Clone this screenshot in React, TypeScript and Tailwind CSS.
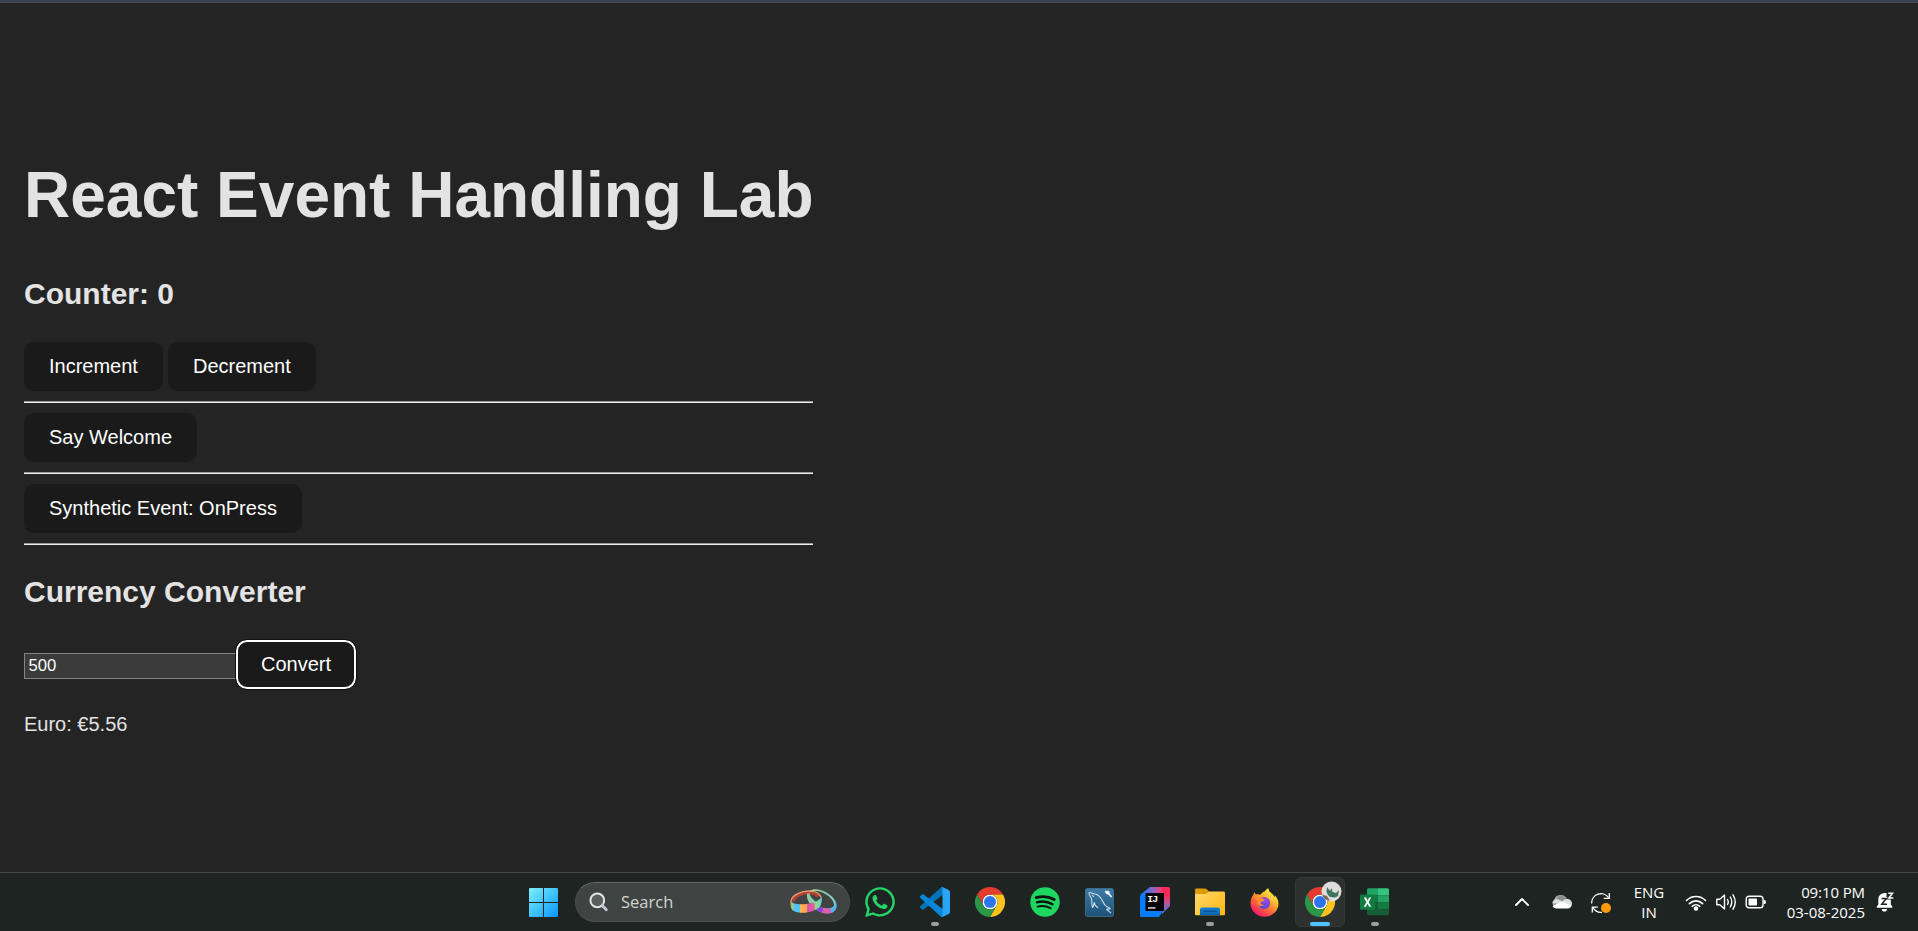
import { useState, type ReactNode } from "react";
import { FaWhatsapp } from "react-icons/fa";

function ChromeLogo({ size = 30 }: { size?: number }) {
  return (
    <svg width={size} height={size} viewBox="0 0 48 48">
      <circle cx="24" cy="24" r="12" fill="#fff" />
      <path fill="#e33b2e" d="M24,12H44.7812a23.9939,23.9939,0,0,0-41.5639.0029L13.6079,30l.0093-.0024A11.9852,11.9852,0,0,1,24,12Z" />
      <path fill="#fcc31e" d="M34.3913,30.0029,24.0007,48A23.994,23.994,0,0,0,44.78,12.0031H23.9989l-.0025.0093A11.985,11.985,0,0,1,34.3913,30.0029Z" />
      <path fill="#2a9648" d="M13.6086,30.0031,3.218,12.006A23.994,23.994,0,0,0,24.0025,48L34.3931,30.0029l-.0067-.0068a11.9852,11.9852,0,0,1-20.7778.007Z" />
      <circle cx="24" cy="24" r="9.6" fill="#2b74ea" />
    </svg>
  );
}

function StartLogo() {
  return (
    <svg width="29" height="29" viewBox="0 0 29 29">
      <defs>
        <linearGradient id="win" x1="0" y1="0" x2="29" y2="29" gradientUnits="userSpaceOnUse">
          <stop offset="0" stopColor="#7df0ff" />
          <stop offset="0.5" stopColor="#42c4fb" />
          <stop offset="1" stopColor="#0a95fb" />
        </linearGradient>
      </defs>
      <path fill="url(#win)" d="M.8 0H14v14H0V.8zM15 0h13.2l.8.8V14H15zM0 15h14v14H.8l-.8-.8zM15 15h14v13.2l-.8.8H15z" />
    </svg>
  );
}

function VsCodeLogo() {
  return (
    <svg width="30" height="30" viewBox="0 0 100 100">
      <path fill="#0072b8" d="M96.4614 10.7962L75.8569 0.875542C73.4719 -0.272773 70.6217 0.211611 68.75 2.08333L1.29858 63.5832C-0.515693 65.2373 -0.513607 68.0937 1.30308 69.7452L6.81272 74.754C8.29793 76.1042 10.5347 76.2036 12.1338 74.9905L93.3609 13.3699C96.086 11.3026 100 13.2462 100 16.6667V16.4275C100 14.0265 98.6246 11.8378 96.4614 10.7962Z" />
      <path fill="#0a86d8" d="M96.4614 89.2038L75.8569 99.1245C73.4719 100.273 70.6217 99.7884 68.75 97.9167L1.29858 36.4169C-0.515693 34.7627 -0.513607 31.9063 1.30308 30.2548L6.81272 25.246C8.29793 23.8958 10.5347 23.7964 12.1338 25.0095L93.3609 86.6301C96.086 88.6974 100 86.7538 100 83.3334V83.5726C100 85.9735 98.6246 88.1622 96.4614 89.2038Z" />
      <path fill="#2aa5f5" d="M75.8578 99.1263C73.4721 100.274 70.6219 99.7885 68.75 97.9166C71.0564 100.223 75 98.5895 75 95.3278V4.67213C75 1.41039 71.0564 -0.223106 68.75 2.08329C70.6219 0.211402 73.4721 -0.273666 75.8578 0.873633L96.4587 10.7807C98.6234 11.8217 100 14.0112 100 16.4132V83.5871C100 85.9891 98.6234 88.1786 96.4586 89.2196L75.8578 99.1263Z" />
    </svg>
  );
}

function SpotifyLogo() {
  return (
    <svg width="30" height="30" viewBox="0 0 30 30" fill="none" stroke="#0c120e" strokeLinecap="round">
      <circle cx="15" cy="15" r="14.7" fill="#1ed760" stroke="none" />
      <path strokeWidth="2.9" d="M6.2 10.6C12 9 19 9.6 24.2 12.6" />
      <path strokeWidth="2.4" d="M6.9 15.3c5.2-1.4 11-.8 15.6 1.9" />
      <path strokeWidth="1.9" d="M7.5 19.6c4.5-1.1 9.3-.6 13.2 1.7" />
    </svg>
  );
}

function MySqlLogo() {
  return (
    <svg className="mr-[2px]" width="29" height="29" viewBox="0 0 29 29" fill="none">
      <defs>
        <linearGradient id="sql" x1="0" y1="0" x2="0" y2="29" gradientUnits="userSpaceOnUse">
          <stop stopColor="#3d7ca8" />
          <stop offset="1" stopColor="#1d5176" />
        </linearGradient>
      </defs>
      <rect x=".4" y=".4" width="28.2" height="28.2" rx="2.5" fill="url(#sql)" stroke="#447797" strokeWidth=".8" />
      <g stroke="#cfe0ea" strokeWidth="1.1" strokeLinecap="round" strokeLinejoin="round">
        <path d="M12.700 19.500C10.500 18.500 9.500 16.500 9.300 14.500c-.5 2-.8 3.500-1.600 5C6 17 7.500 13 6.400 10.500 5.300 8.200 3.500 6.200 4.100 4.800c1.100-1 3.300.7 4.700.9 5.100.6 7.700 4.500 9.300 8.300.9 2.200 1.500 3.600 3.900 4.700 1.800.8 3 1.500 3.200 2-1.300.2-2.500.3-3.500.6 1 1.200 2.800 2.200 4 3.500" />
        <path d="M7.500 7.600l1 .8" />
      </g>
      <path d="M20.500 2.300l1.800 1.200.3-1.200 2 1.500.2 2 2.400 2.700-1.300 1-2.400-2.700-2.300-.7-1.300-2.200z" fill="#f2f6f8" />
    </svg>
  );
}

function IntelliJLogo() {
  return (
    <svg width="30" height="30" viewBox="0 0 30 30">
      <defs>
        <linearGradient id="ij" x1="3" y1="10" x2="28" y2="7" gradientUnits="userSpaceOnUse">
          <stop offset="0" stopColor="#2c78f0" />
          <stop offset=".35" stopColor="#6f6bd0" />
          <stop offset=".62" stopColor="#c8509a" />
          <stop offset=".85" stopColor="#fe2857" />
        </linearGradient>
        <linearGradient id="ijr" x1="27" y1="8" x2="27" y2="24" gradientUnits="userSpaceOnUse">
          <stop offset="0" stopColor="#fe2857" />
          <stop offset=".5" stopColor="#b9569c" />
          <stop offset="1" stopColor="#5f6fd0" />
        </linearGradient>
      </defs>
      <path fill="url(#ij)" d="M10 0h18.500A1.500 1.500 0 0 1 30 1.500V8H0z" />
      <path fill="url(#ijr)" d="M22 8h8v11L22 27z" />
      <path fill="#087cfa" d="M0 9l3-2.700L6 8v16h17l-4 6H1.500A1.500 1.500 0 0 1 0 28.500z" />
      <rect x="5.500" y="6" width="18.500" height="18" fill="#050505" />
      <text x="7.200" y="14.800" fill="#fff" fontFamily="Liberation Mono, monospace" fontWeight="700" fontSize="9.800" letterSpacing="-.9">IJ</text>
      <rect x="8" y="20.300" width="7.500" height="1.300" fill="#fff" />
    </svg>
  );
}

function FolderLogo() {
  return (
    <svg width="30" height="28" viewBox="0 0 30 28">
      <defs>
        <linearGradient id="fold" x1="2" y1="3" x2="28" y2="28" gradientUnits="userSpaceOnUse">
          <stop stopColor="#ffd86b" />
          <stop offset="1" stopColor="#ffb812" />
        </linearGradient>
        <linearGradient id="tray" x1="0" y1="19" x2="0" y2="27" gradientUnits="userSpaceOnUse">
          <stop stopColor="#1684d8" />
          <stop offset="1" stopColor="#0a63b0" />
        </linearGradient>
      </defs>
      <path fill="#dd9b06" d="M0 2Q0 .6 1.500 .6h8.300c1 0 1.700.4 2.500 1.200l2 2L12 8H0z" />
      <path fill="url(#fold)" d="M0 6h10c1 0 1.500-.3 2.200-1l1-.8c.5-.4 1-.6 1.800-.6h13.500Q30 3.600 30 5v21.300Q30 27.200 29 27.200H1Q0 27.200 0 26.200z" />
      <path fill="url(#tray)" d="M5 27.200v-6Q5 19.400 7 19.400h16q2 0 2 1.800v6z" />
      <path stroke="#0b4b86" strokeWidth="1.100" d="M8.500 23.200h13" />
    </svg>
  );
}

function FirefoxLogo() {
  return (
    <svg className="mr-[1px]" width="29" height="29" viewBox="0 0 29 29">
      <defs>
        <linearGradient id="ffx" x1="23" y1="3" x2="6" y2="27" gradientUnits="userSpaceOnUse">
          <stop offset="0" stopColor="#fff04a" />
          <stop offset=".32" stopColor="#ffb52e" />
          <stop offset=".6" stopColor="#ff6a38" />
          <stop offset="1" stopColor="#f5156c" />
        </linearGradient>
        <radialGradient id="ffp" cx="16" cy="12" r="8" gradientUnits="userSpaceOnUse">
          <stop offset="0" stopColor="#a545e6" />
          <stop offset="1" stopColor="#5a4ad8" />
        </radialGradient>
      </defs>
      <path fill="url(#ffx)" d="M.5 15.500C.5 11 2 8.500 3.600 6.600c0-.9.300-1.700.9-2.300.2 1 .8 1.700 1.500 2.100 1.600-.4 3.200-.2 4.400.4 1.200-1.800 3-2.900 4.300-3.200C15.700 2.100 16.800.9 18.400.3c.4 2.700 1.300 3.600 3.100 5 1.200.9 2.300 2.200 2.800 3.700.4-.5.500-1.100.4-1.800 2.400 2.300 3.900 5.300 3.800 8.800C28.300 23.300 22 28.700 14.500 28.700S.5 22.800.5 15.500z" />
      <circle cx="14.200" cy="14.900" r="6" fill="url(#ffp)" />
      <path fill="#ff8d2c" d="M4 9.500c2.700-1.300 5.600-.6 6.700.7 1.800 0 3 .5 4.200 1-.2 1.200-1.200 2-2.900 2.300-.7.200-1.300.6-1.300 1.400 0 1.400 1.600 2.300 3.600 1.900-1.600 1.900-5 1.700-6.500-.4-1-1.400-.7-3-.1-4.200C6.300 11.500 5 10.700 4 9.500z" />
      <path fill="#ffd23b" d="M17.300 6.300c2.800 1.700 4.900 5 4.500 8.500 1.300-2.400 1.200-5.300-.5-7.700z" opacity=".85" />
    </svg>
  );
}

function ExcelLogo() {
  return (
    <svg width="30" height="28" viewBox="0 0 30 28">
      <path fill="#21a366" d="M8.500.3H18v7H7V1.800Q7 .3 8.500.3z" />
      <path fill="#33c481" d="M18 .3h9.500Q29 .3 29 1.800v5.500H18z" />
      <path fill="#107c41" d="M7 7.200h11v7H7zM18 14.200h11v7H18z" />
      <path fill="#21a366" d="M18 7.200h11v7H18z" />
      <path fill="#185c37" d="M7 14.200h11v7h11v4.500q0 1.500-1.500 1.500h-19Q7 27.200 7 25.700z" />
      <rect x="0" y="6.500" width="15" height="15.300" rx="1.300" fill="#107c41" />
      <path fill="#fff" d="M3.700 18.800l2.700-4.600-2.500-4.600h2.200l1.500 3 1.500-3h2.100l-2.500 4.600 2.600 4.600H9.100l-1.600-3.100-1.600 3.100z" />
    </svg>
  );
}

function RingsArt() {
  return (
    <svg width="48" height="28" viewBox="0 0 48 28" fill="none">
      <defs>
        <linearGradient id="band" x1="0" y1="0" x2="32" y2="0" gradientUnits="userSpaceOnUse">
          <stop offset="0" stopColor="#e8825a" />
          <stop offset=".07" stopColor="#8fd38c" />
          <stop offset=".14" stopColor="#55c4ee" />
          <stop offset=".3" stopColor="#55c4ee" />
          <stop offset=".32" stopColor="#ffb85a" />
          <stop offset=".53" stopColor="#ff9d50" />
          <stop offset=".55" stopColor="#d94fb4" />
          <stop offset=".76" stopColor="#e2609a" />
          <stop offset=".79" stopColor="#8ee07d" />
          <stop offset="1" stopColor="#66d0d8" />
        </linearGradient>
        <linearGradient id="back" x1="18" y1="0" x2="46" y2="24" gradientUnits="userSpaceOnUse">
          <stop offset="0" stopColor="#c7d39a" />
          <stop offset=".3" stopColor="#86c9a0" />
          <stop offset=".7" stopColor="#8ad6bf" />
          <stop offset="1" stopColor="#5eb9ed" />
        </linearGradient>
      </defs>
      <path fill="url(#back)" fillRule="evenodd" d="M17 8C17 2 24-.5 32 2.500c9 3.300 15 10 14.500 15.500-.5 6-6 8-12 7-9-1.500-17.500-9.500-17.500-17zM20 7.500C21 13.500 29 20 36 20.500c5 .3 8-1.200 8-4C44 12 38 6.500 31 4c-6-2-11-.5-11 3.500z" />
      <path fill="#8b42dc" d="M26 17l7.500 3-1 4.700q-4-1-7-3.500z" />
      <path fill="#de5fb0" d="M33.500 20q3.500.8 7 .2l1 4.700q-5 1.200-9.500-.2z" />
      <path fill="#52b4ed" d="M40.500 20.200q3-.8 3.800-3l2.400-.2q0 6-5.200 7.900z" />
      <path fill="url(#band)" d="M.5 12.500C2 19 29 17 31.500 8.500c.6 2.500.2 6-.5 8C28.500 25 3 28.500 1 19.500.5 17.500.3 14.500.5 12.500z" />
      <path stroke="#b33f35" strokeWidth="3" d="M3.500 13.500C4 7.500 14 4 21 5q5 .8 7 3.500" />
      <path stroke="#ee9a6d" strokeWidth="1.300" d="M1 14.500C.5 6.500 13 2.500 21 3.100q8 .6 10 6.200" />
      <path stroke="#8ccdb0" strokeWidth="2.600" d="M18 5.500q1.500 5.500 7.500 9.500" />
    </svg>
  );
}

function SearchIcon() {
  return (
    <svg width="19" height="20" viewBox="0 0 19 20" fill="none">
      <circle cx="8.300" cy="8.300" r="6.900" fill="#5a5e5c" stroke="#e3e5e8" strokeWidth="2" />
      <path d="M13.300 13.500l4 4.300" stroke="#c6cad6" strokeWidth="2.800" strokeLinecap="round" />
    </svg>
  );
}

function TaskItem({ children, mark }: { children: ReactNode; mark?: "open" | "active" }) {
  return (
    <div
      className={
        mark === "active"
          ? "relative flex h-[50px] w-[50px] items-center justify-center rounded-md border border-[#363b39] bg-[#2c3130]"
          : "relative flex h-[50px] w-[50px] items-center justify-center"
      }
    >
      {children}
      {mark === "open" && <span className="absolute bottom-[1px] left-[21px] h-1 w-2 rounded-full bg-[#9d9e9e]" />}
      {mark === "active" && <span className="absolute bottom-0 left-[14px] h-1 w-5 rounded-full bg-[#4cc2ff]" />}
    </div>
  );
}

function Tray() {
  return (
    <div className="ml-auto flex items-center pr-[24px] text-[15px] leading-[20px] text-white">
      <svg width="16" height="10" viewBox="0 0 16 10" fill="none" stroke="#fff" strokeWidth="1.900" strokeLinecap="round" strokeLinejoin="round">
        <path d="M2 8l6-6 6 6" />
      </svg>
      <svg className="ml-[21px]" width="22" height="14" viewBox="0 0 22 14">
        <path fill="#a6a8a7" d="M5.500 13A5 5 0 0 1 3.300 4.200 7 7 0 0 1 16 4l-8 4z" />
        <path fill="#8b8d8c" d="M5.500 3A6.500 6.500 0 0 1 16 4c-2 .2-3 1-4 2z" />
        <path fill="#dedfdf" d="M1.500 8q1-3 4-4l5.800 2.400Q13.500 3.600 16.300 4A4.600 4.600 0 0 1 21 9l-3 1z" />
        <path fill="#fff" d="M1.500 11l9.800-4.600c1.500 1 5 3 9.600 2.900C20.700 12 19 13.500 16.500 13.500h-11c-1.800 0-3.200-1-4-2.500z" />
      </svg>
      <svg className="ml-[17px] mt-[1px]" width="22" height="22" viewBox="0 0 22 22" fill="none" stroke="#fff" strokeWidth="1.300">
        <path d="M1.600 11.500A9.300 9.300 0 0 1 18.700 6" />
        <path d="M19.300 1v5.300h-5.500" />
        <path d="M12 20.300A9.300 9.300 0 0 1 3 15.600M2.300 20.500v-5.300h5.500" />
        <circle cx="16" cy="16" r="5" fill="#ff9a0d" stroke="none" />
      </svg>
      <div className="ml-[19px] flex w-[36px] flex-col items-center font-['Open_Sans',sans-serif] text-[15px]">
        <span>ENG</span>
        <span>IN</span>
      </div>
      <svg className="ml-[18px]" width="22" height="17" viewBox="0 0 22 17" fill="none" stroke="#fff" strokeWidth="1.600" strokeLinecap="round">
        <path d="M1.500 6.500a13.300 13.300 0 0 1 19 0" />
        <path d="M4.400 9.600a9.300 9.300 0 0 1 13.200 0" />
        <path d="M7.200 12.300a5.500 5.500 0 0 1 7.600 0" />
        <circle cx="11" cy="14.500" r="1.500" fill="#fff" />
      </svg>
      <svg className="ml-[8px]" width="22" height="18" viewBox="0 0 22 18" fill="none" stroke="#fff" strokeWidth="1.400" strokeLinecap="round" strokeLinejoin="round">
        <path d="M1.800 6.300h3L9.500 2v14l-4.700-4.300h-3z" />
        <path d="M12.500 6.500q1.500 2.500 0 5M15.300 4q3 5 0 10M18 1.800q4.500 7.200 0 14.400" />
      </svg>
      <svg className="ml-[8px]" width="22" height="14" viewBox="0 0 22 14" fill="none">
        <rect x="1.200" y="1.200" width="16.800" height="11.600" rx="2.800" stroke="#fff" strokeWidth="1.400" />
        <rect x="3.500" y="3.500" width="8.500" height="7" rx="1" fill="#fff" />
        <path d="M18.700 4.700q2.300 0 2.300 2.300t-2.300 2.300z" fill="#fff" />
      </svg>
      <div className="ml-[19px] flex w-[79px] flex-col items-end whitespace-nowrap font-['Open_Sans',sans-serif] text-[15px]">
        <span className="tracking-[-0.1px]">09:10 PM</span>
        <span>03-08-2025</span>
      </div>
      <svg className="ml-[11px]" width="18" height="20" viewBox="0 0 18 20">
        <path fill="#fff" d="M.8 15.800v-1.400l1.500-2V7.300A6.200 6.200 0 0 1 8.500 1h2v4h4.300v7.400l1.500 2v1.400zM5.800 17h5.200a2.600 2.600 0 0 1-5.200 0z" />
        <path fill="none" stroke="#1e2522" strokeWidth="1.500" d="M5.500 6.500h4.800l-4.500 5.700h5.200" />
        <path fill="none" stroke="#1e2522" strokeWidth="3.200" d="M11.500 1.500h5l-3.500 4.500h4" />
        <path fill="none" stroke="#fff" strokeWidth="1.500" d="M12.300 1.300h4.200l-3.600 4.700h4.400" />
      </svg>
    </div>
  );
}

function Taskbar() {
  return (
    <footer className="flex h-[59px] shrink-0 border-t border-[#464947] bg-[#1e2421] pt-[4px] pb-[4px]">
      <div className="ml-[518px] flex h-[50px] items-center">
        <TaskItem><StartLogo /></TaskItem>
        <div className="ml-[7px] flex h-10 w-[275px] items-center rounded-full border border-[#4a4e4c] border-t-[#656967] bg-[#3f4341] pl-[13px] pr-[11px]">
          <SearchIcon />
          <span className="ml-[13px] font-['Open_Sans',sans-serif] text-[16.500px] text-[#d2d4d3]">Search</span>
          <span className="ml-auto"><RingsArt /></span>
        </div>
        <div className="ml-[5px] flex gap-[5px]">
          <TaskItem><FaWhatsapp size={34} color="#25d366" /></TaskItem>
          <TaskItem mark="open"><VsCodeLogo /></TaskItem>
          <TaskItem><ChromeLogo /></TaskItem>
          <TaskItem><SpotifyLogo /></TaskItem>
          <TaskItem><MySqlLogo /></TaskItem>
          <TaskItem><IntelliJLogo /></TaskItem>
          <TaskItem mark="open"><FolderLogo /></TaskItem>
          <TaskItem><FirefoxLogo /></TaskItem>
          <TaskItem mark="active">
            <ChromeLogo />
            <svg className="absolute top-[3px] left-[25px]" width="21" height="21" viewBox="0 0 21 21">
              <circle cx="10.500" cy="10.500" r="10" fill="#deddda" />
              <path fill="#806a58" d="M1 13.500l5 1.500 3 5Q3 19 1 13.500z" />
              <path fill="#3f7560" d="M6 6l3 4 1.500-3 1 4 3.500 1 3-3-1 6-3 1.500-5-.5-2-2-1.500-3z" />
            </svg>
          </TaskItem>
          <TaskItem mark="open"><ExcelLogo /></TaskItem>
        </div>
      </div>
      <Tray />
    </footer>
  );
}

function LabButton({ children, onClick }: { children: ReactNode; onClick?: () => void }) {
  return (
    <button
      onClick={onClick}
      className="h-[49px] rounded-[10px] border border-transparent bg-[#1a1a1a] px-6 text-[20px] leading-[23px] font-medium text-white"
    >
      {children}
    </button>
  );
}

function Rule() {
  return <hr className="my-2.5 h-0.5 border-t border-b border-t-[#9a9a9a] border-b-[#eeeeee]" />;
}

export default function App() {
  const [count, setCount] = useState(0);
  const [amount, setAmount] = useState("500");
  const [euro, setEuro] = useState("5.56");

  return (
    <div className="flex h-[931px] w-[1918px] flex-col overflow-hidden bg-[#242424] font-['Liberation_Sans',Arial,sans-serif] text-[20px] leading-[30px] text-[#e3e3e3]">
      <div className="h-[3px] shrink-0 border-b border-[#454a55] bg-[#384052]" />
      <main className="w-[813px] flex-1 pt-[156px] pl-6">
        <h1 className="text-[64px] leading-[72px] font-bold whitespace-nowrap">React Event Handling Lab</h1>
        <h2 className="mt-[41px] mb-[26px] text-[30px] leading-[44px] font-bold">Counter: {count}</h2>
        <div className="flex gap-[5px]">
          <LabButton onClick={() => setCount(count + 1)}>Increment</LabButton>
          <LabButton onClick={() => setCount(count - 1)}>Decrement</LabButton>
        </div>
        <Rule />
        <div className="flex">
          <LabButton>Say Welcome</LabButton>
        </div>
        <Rule />
        <div className="flex">
          <LabButton>Synthetic Event: OnPress</LabButton>
        </div>
        <Rule />
        <h2 className="mt-[25px] mb-[26px] text-[30px] leading-[44px] font-bold">Currency Converter</h2>
        <div className="flex items-baseline">
          <input
            value={amount}
            onChange={(e) => setAmount(e.target.value)}
            className="h-[26px] w-[212px] rounded-[1px] border border-r-0 border-[#858585] bg-[#3b3b3b] px-[3.5px] text-[16.667px] leading-[20px] text-white"
          />
          <button
            onClick={() => setEuro((Number(amount) / 90).toFixed(2))}
            className="h-[49px] w-[120px] rounded-[11px] border-2 border-white bg-[#1a1a1a] text-[20px] leading-[23px] font-medium text-white outline-1 outline-[#101010]"
          >
            Convert
          </button>
        </div>
        <p className="mt-5">Euro: €{euro}</p>
      </main>
      <Taskbar />
    </div>
  );
}
